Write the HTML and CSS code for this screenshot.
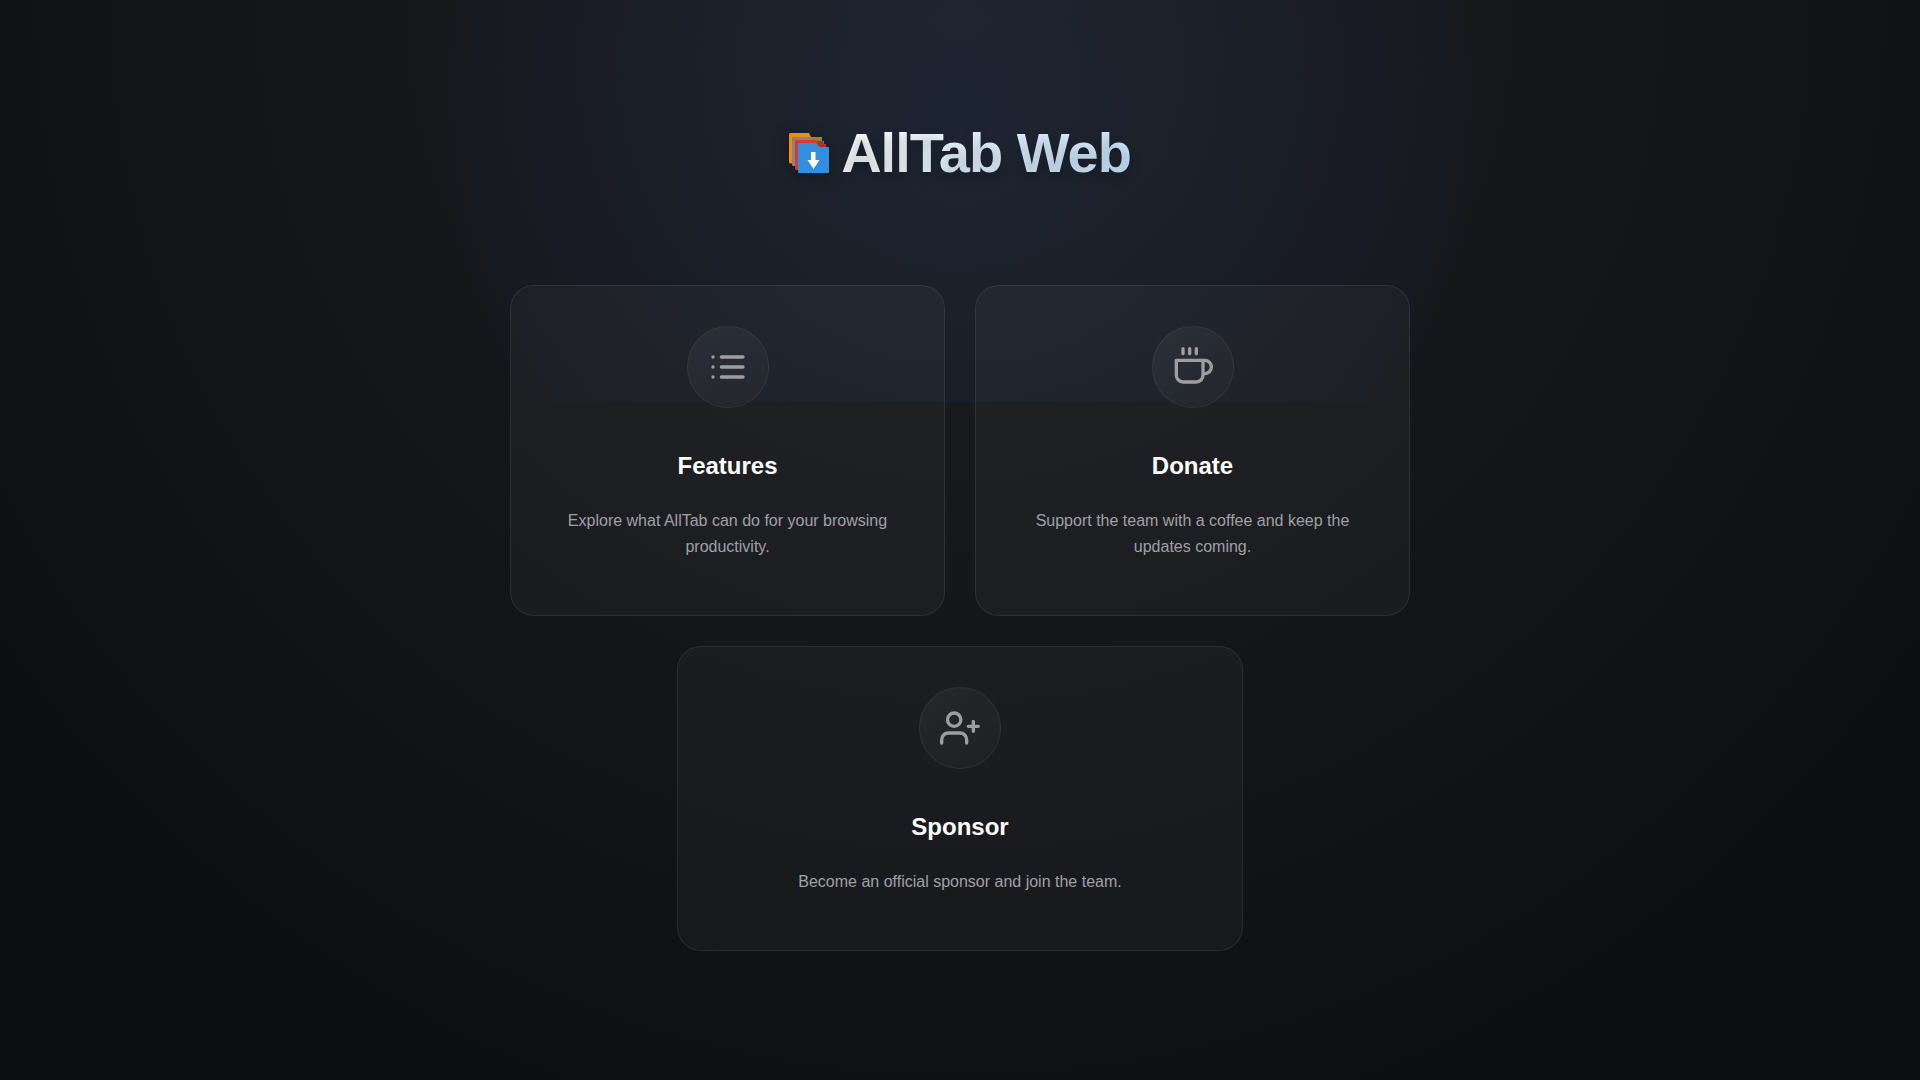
FILE: index.html
```html
<!DOCTYPE html>
<html lang="en">
<head>
    <meta charset="UTF-8">
    <meta name="viewport" content="width=device-width, initial-scale=1.0">
    <title>AllTab Web</title>
    <link rel="stylesheet" href="styles.css">
</head>
<body>
    <div class="glow"></div>
    <div class="container">
        <header class="header">
            <svg class="logo" viewBox="0 0 40 40" aria-hidden="true">
                <path fill="#f58a07" d="M0 1.5Q0 0 1.5 0H20L22 4H33V30.500H1.500Q0 30.500 0 29Z"/>
                <path fill="#c87306" d="M22 4H32Q33 4 33 5V8H22Z"/>
                <path fill="#858585" d="M3 5Q3 4 4 4H22L24 8H35V33H4.500Q3 33 3 31.500Z"/>
                <path fill="#5c5652" d="M24 8H34L35 11H24Z"/>
                <path fill="#d73a35" d="M6 8Q6 7 7 7H26L29 11H37V37H8Q6 37 6 35.500Z"/>
                <path fill="#b92d2b" d="M29 11H36L37.500 14H30Z"/>
                <path fill="#328fe0" d="M9 11Q9 10 10 10H27.500L30.500 14H39Q40 14 40 15V39Q40 40 39 40H10Q9 40 9 39Z"/>
                <path fill="#fff" d="M22 19H26.500V27H30.500L24.500 36L18.500 27H22Z"/>
            </svg>
            <h1 class="title">AllTab Web</h1>
        </header>
        <main class="cards">
            <a class="card" href="#features">
                <span class="icon">
                    <svg viewBox="0 0 24 24"><path d="M8 6h13M8 12h13M8 18h13M3 6h.01M3 12h.01M3 18h.01"/></svg>
                </span>
                <h2>Features</h2>
                <p>Explore what AllTab can do for your browsing productivity.</p>
            </a>
            <a class="card" href="#donate">
                <span class="icon">
                    <svg viewBox="0 0 24 24"><path d="M18 8h1a4 4 0 0 1 0 8h-1M2 8h16v9a4 4 0 0 1-4 4H6a4 4 0 0 1-4-4zM6 1v3M10 1v3M14 1v3"/></svg>
                </span>
                <h2>Donate</h2>
                <p>Support the team with a coffee and keep the updates coming.</p>
            </a>
            <a class="card card-wide" href="#sponsor">
                <span class="icon">
                    <svg viewBox="0 0 24 24"><path d="M16 21v-2a4 4 0 0 0-4-4H5a4 4 0 0 0-4 4v2M20 8v6M23 11h-6"/><circle cx="8.500" cy="7" r="4"/></svg>
                </span>
                <h2>Sponsor</h2>
                <p>Become an official sponsor and join the team.</p>
            </a>
        </main>
    </div>
</body>
</html>
```

FILE: styles.css
```css
* {
    box-sizing: border-box;
    margin: 0;
    padding: 0;
}
body {
    font-family: "Liberation Sans", Arial, sans-serif;
    min-height: 100vh;
    background: radial-gradient(circle at 50% 0%, #1e1f23 0%, #0e0f13 82%);
    color: #fff;
    display: flex;
    justify-content: center;
    overflow-x: hidden;
}
.glow {
    position: absolute;
    top: -180px;
    left: 50%;
    width: 1200px;
    height: 582px;
    transform: translateX(-50%);
    background: radial-gradient(circle, rgba(40, 90, 170, 0.12) 0%, rgba(30, 60, 140, 0.04) 490px, rgba(30, 60, 140, 0) 520px);
    pointer-events: none;
}
.container {
    position: relative;
    width: 100%;
    max-width: 940px;
    padding: 120px 20px;
}
.header {
    display: flex;
    align-items: center;
    justify-content: center;
    gap: 12px;
    margin-bottom: 100px;
}
.logo {
    width: 40px;
    height: 40px;
    filter: drop-shadow(0 4px 8px rgba(0, 0, 0, 0.3));
}
.title {
    font-size: 56px;
    line-height: 65px;
    letter-spacing: -1px;
    background: linear-gradient(135deg, #fff 0%, #c4e3fc 100%);
    -webkit-background-clip: text;
    background-clip: text;
    color: transparent;
    text-shadow: 0 4px 12px rgba(0, 0, 0, 0.2);
}
.cards {
    display: grid;
    grid-template-columns: 1fr 1fr;
    gap: 30px;
}
.card {
    display: flex;
    flex-direction: column;
    align-items: center;
    padding: 40px;
    text-align: center;
    text-decoration: none;
    color: #fff;
    background: rgba(255, 255, 255, 0.03);
    border: 1px solid rgba(255, 255, 255, 0.08);
    border-radius: 24px;
}
.card-wide {
    grid-column: 1 / -1;
    justify-self: center;
    width: 100%;
    max-width: 566px;
}
.icon {
    display: flex;
    align-items: center;
    justify-content: center;
    width: 82px;
    height: 82px;
    margin-bottom: 40px;
    border-radius: 50%;
    background: linear-gradient(135deg, rgba(255, 255, 255, 0.05), rgba(255, 255, 255, 0.02));
    border: 1px solid rgba(255, 255, 255, 0.06);
}
.icon svg {
    width: 40px;
    height: 40px;
    fill: none;
    stroke: #9e9da2;
    stroke-width: 2;
    stroke-linecap: round;
    stroke-linejoin: round;
}
.card h2 {
    font-size: 24px;
    line-height: 36px;
    margin-bottom: 24px;
}
.card p {
    font-size: 16px;
    line-height: 26px;
    margin-bottom: 15px;
    color: #a0a0a5;
}
@media (max-width: 700px) {
    .cards {
        grid-template-columns: 1fr;
    }
}
```
